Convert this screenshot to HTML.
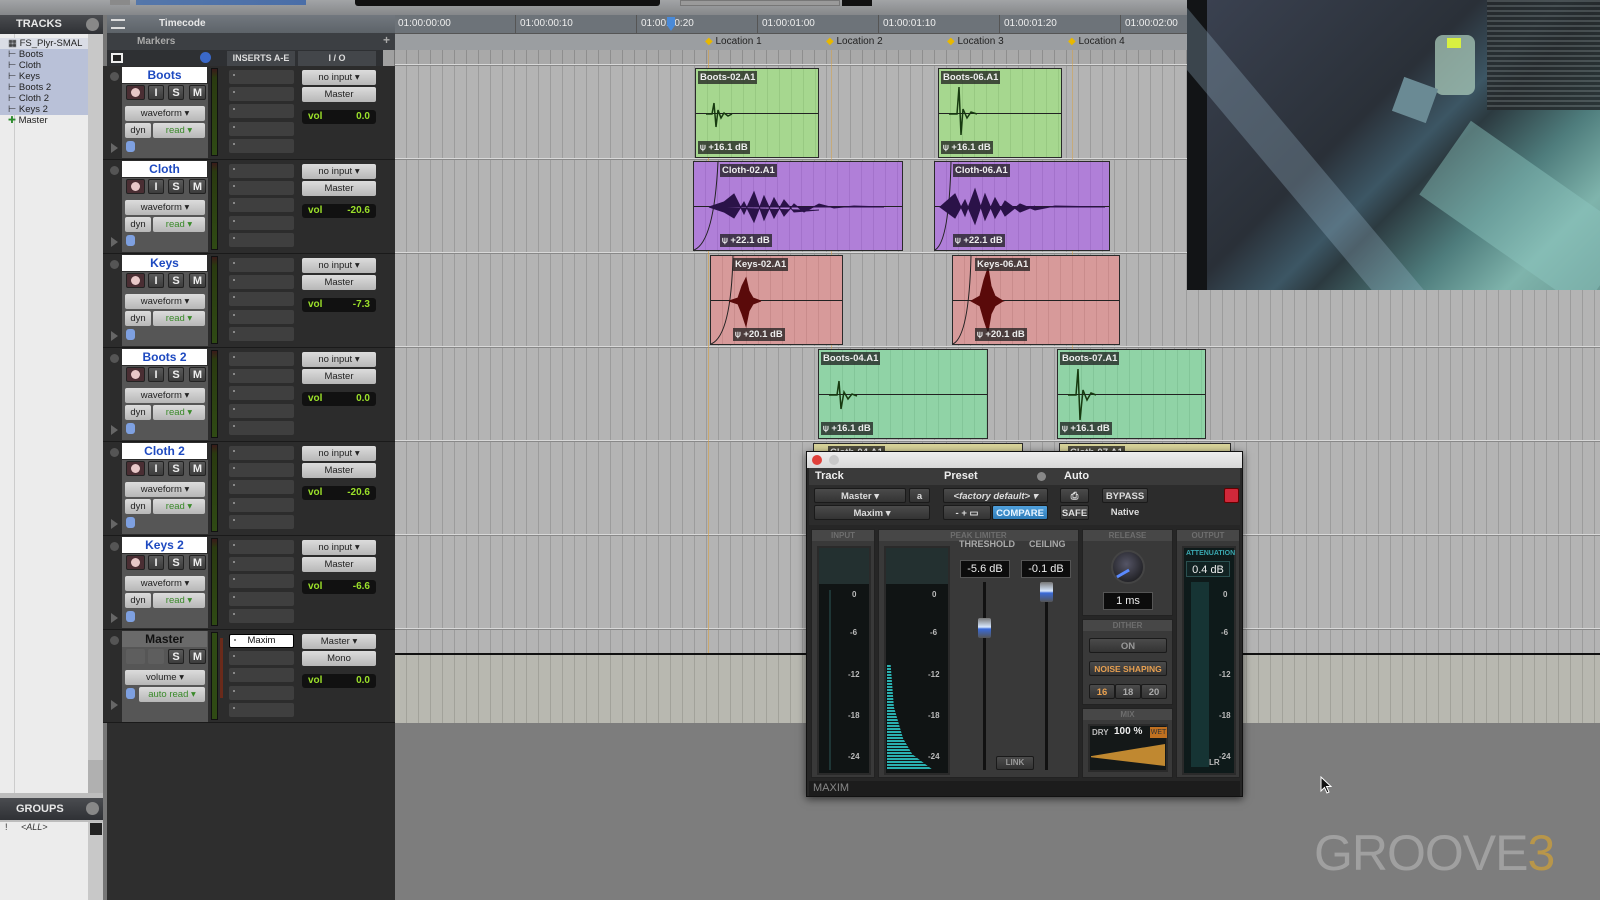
<!DOCTYPE html>
<html><head><meta charset="utf-8">
<style>
*{margin:0;padding:0;box-sizing:border-box}
body{width:1600px;height:900px;overflow:hidden;background:#2e2e2e;font-family:"Liberation Sans",sans-serif;font-size:10px;position:relative}
.a{position:absolute}
.tb{left:0;top:0;width:1600px;height:15px;background:linear-gradient(#a2a4a6,#85878a)}
.lp{left:0;top:15px;width:103px;height:885px;background:#bdbdbd}
.hdr{background:linear-gradient(#4a4c50,#2f3135);color:#e8e8e8;font-weight:bold;font-size:11px}
.list{background:#ececec}
.li{position:absolute;left:8px;font-size:9.5px;color:#222;height:11px;line-height:11px}
.sel{background:#b9c1d8}
.trk{position:absolute;left:103px;width:292px;height:94px;background:#2c2c2c;border-bottom:1px solid #1a1a1a}
.trk .nm{position:absolute;left:19px;top:1px;width:85px;height:16px;background:#fff;color:#1d49c0;font-weight:bold;font-size:12px;text-align:center;line-height:16px}
.trk .sb{position:absolute;left:19px;top:18px;width:86px;height:74px;background:#565656}
.btn{position:absolute;height:15px;background:linear-gradient(#dcdcdc,#b7b7b7);border-radius:2px;color:#222;text-align:center;line-height:15px;font-size:9.5px}
.dk{background:linear-gradient(#5a5a5a,#3c3c3c);color:#eee;font-weight:bold;font-size:11px;border:1px solid #222}
.grn{color:#3a8a2a}
.ins{position:absolute;left:126px;width:65px;height:14px;background:#3f3f3f;border-radius:2px}
.ins:before{content:"";position:absolute;left:4px;top:4px;width:2px;height:2px;background:#888}
.vol{position:absolute;left:199px;top:44px;width:74px;height:14px;background:#111;border-radius:3px;color:#9be02a;font-weight:bold;font-size:10px;line-height:14px;padding:0 6px}
.vol b{float:right}
.met{position:absolute;left:108px;top:2px;width:7px;height:88px;background:linear-gradient(#3a1a1a 0,#2a3a10 10%,#2f4a14 100%);border:1px solid #111}
.cc{position:absolute;left:7px;top:6px;width:9px;height:9px;border-radius:50%;background:#555}
.pt{position:absolute;left:8px;top:77px;width:0;height:0;border-left:7px solid #666;border-top:5px solid transparent;border-bottom:5px solid transparent}
.tl{left:395px;top:50px;width:1205px;height:673px;background:repeating-linear-gradient(90deg,#b4b4b4 0,#b4b4b4 11px,#9c9c9c 11px,#9c9c9c 12px)}
.row{position:absolute;left:395px;width:1205px;height:2px;background:#d8d8d8;border-bottom:1px solid #888}
.clip{position:absolute;border:1px solid #2a2a2a;overflow:hidden}
.clip .t{position:absolute;left:2px;top:2px;background:rgba(30,30,30,.75);color:#eee;font-size:9.5px;font-weight:bold;padding:1px 2px}
.clip .g{position:absolute;left:2px;bottom:3px;background:rgba(30,30,30,.75);color:#eee;font-size:9.5px;font-weight:bold;padding:1px 2px}
.clip .ln{position:absolute;left:0;right:0;top:50%;height:1px;background:#222}
.pl{left:806px;top:451px;width:437px;height:346px;background:#262626;border:1px solid #111;box-shadow:0 2px 8px rgba(0,0,0,.6)}
.pb{position:absolute;height:15px;border-radius:2px;background:linear-gradient(#4b4b4b,#333);color:#ddd;font-weight:bold;font-size:9.5px;text-align:center;line-height:15px;border:1px solid #1a1a1a}
.sec{position:absolute;top:77px;height:249px;background:#393939;border:1px solid #222}
.sh{position:absolute;left:0;right:0;top:0;height:11px;background:#474747;color:#6e6e6e;font-size:8px;font-weight:bold;text-align:center;line-height:11px}
.mb{position:absolute;background:#101414;border:2px solid #2a2a2a}
.sc{position:absolute;color:#bbb;font-size:8px;font-weight:bold}
.vb{position:absolute;background:#0c0c0c;color:#eee;font-size:11px;text-align:center;line-height:16px;border:1px solid #555}
</style></head><body>
<div class="a tb"></div>
<div class="a" style="left:110px;top:0;width:20px;height:5px;background:#8a8a8a"></div>
<div class="a" style="left:136px;top:0;width:170px;height:5px;background:linear-gradient(90deg,#5577aa,#4a6ea8)"></div>
<div class="a" style="left:355px;top:0;width:305px;height:6px;background:#111;border-radius:0 0 3px 3px"></div>
<div class="a" style="left:680px;top:0;width:160px;height:6px;background:#9a9a9a;border:1px solid #777"></div>
<div class="a" style="left:842px;top:0;width:30px;height:6px;background:#111"></div>

<div class="a lp"></div>
<div class="a hdr" style="left:0;top:15px;width:103px;height:19px;line-height:19px;padding-left:16px">TRACKS</div>
<div class="a" style="left:86px;top:18px;width:13px;height:13px;border-radius:50%;background:#888"></div>
<div class="a list" style="left:0;top:34px;width:88px;height:759px"></div>
<div class="a" style="left:14px;top:34px;width:1px;height:759px;background:#ccc"></div>
<div class="a sel" style="left:0;top:49px;width:88px;height:66px"></div>
<div class="a" style="left:0;top:38px;width:88px;height:11px;background:#dadde6"></div>
<div class="li" style="top:38px">▦ FS_Plyr-SMAL</div>
<div class="li" style="top:49px">⊢ Boots</div>
<div class="li" style="top:60px">⊢ Cloth</div>
<div class="li" style="top:71px">⊢ Keys</div>
<div class="li" style="top:82px">⊢ Boots 2</div>
<div class="li" style="top:93px">⊢ Cloth 2</div>
<div class="li" style="top:104px">⊢ Keys 2</div>
<div class="li" style="top:115px"><span style="color:#2a8a2a">✚</span> Master</div>
<div class="a" style="left:88px;top:34px;width:15px;height:759px;background:#c8c8c8"></div>
<div class="a" style="left:88px;top:760px;width:15px;height:33px;background:#b0b0b0"></div>
<div class="a hdr" style="left:0;top:798px;width:103px;height:22px;line-height:22px;padding-left:16px">GROUPS</div>
<div class="a" style="left:86px;top:802px;width:13px;height:13px;border-radius:50%;background:#888"></div>
<div class="a list" style="left:0;top:822px;width:88px;height:78px"></div>
<div class="a" style="left:5px;top:822px;font-size:9px;color:#333">!</div>
<div class="a" style="left:21px;top:822px;font-size:9px;font-style:italic;color:#333">&lt;ALL&gt;</div>
<div class="a" style="left:88px;top:822px;width:15px;height:78px;background:#c8c8c8"></div>
<div class="a" style="left:90px;top:823px;width:12px;height:12px;background:#222"></div>
<div class="a" style="left:103px;top:15px;width:4px;height:885px;background:#777"></div>

<div class="a hdr" style="left:107px;top:15px;width:288px;height:18px;line-height:18px;padding-left:52px;background:linear-gradient(#72787f,#5d6369);font-size:10px">Timecode</div>
<div class="a" style="left:111px;top:19px;width:14px;height:10px;border:1px solid #ddd;border-width:2px 0"></div>
<div class="a" style="left:107px;top:33px;width:288px;height:17px;background:#3c3f43;color:#aaa;font-weight:bold;font-size:10px;line-height:17px;padding-left:30px">Markers</div>
<div class="a" style="left:383px;top:33px;color:#aaa;font-size:12px;font-weight:bold">+</div>
<div class="a" style="left:107px;top:50px;width:288px;height:16px;background:#2e3033"></div>
<div class="a" style="left:111px;top:53px;width:12px;height:10px;border:2px solid #eee;background:#222"></div>
<div class="a" style="left:200px;top:52px;width:11px;height:11px;border-radius:50%;background:#3a68c8"></div>
<div class="a" style="left:227px;top:51px;width:68px;height:15px;background:#43464a;color:#ddd;font-weight:bold;font-size:9px;line-height:15px;text-align:center">INSERTS A-E</div>
<div class="a" style="left:298px;top:51px;width:78px;height:15px;background:#43464a;color:#ddd;font-weight:bold;font-size:9px;line-height:15px;text-align:center">I / O</div>

<div class="a" style="left:395px;top:15px;width:792px;height:18px;background:#6d7379"></div>
<div class="a" style="left:395px;top:33px;width:792px;height:17px;background:#9b9ea1;border-top:1px solid #555"></div>
<div class="a" style="left:398px;top:18px;color:#eee;font-size:10px">01:00:00:00</div>
<div class="a" style="left:520px;top:18px;color:#eee;font-size:10px">01:00:00:10</div>
<div class="a" style="left:641px;top:18px;color:#eee;font-size:10px">01:00:00:20</div>
<div class="a" style="left:762px;top:18px;color:#eee;font-size:10px">01:00:01:00</div>
<div class="a" style="left:883px;top:18px;color:#eee;font-size:10px">01:00:01:10</div>
<div class="a" style="left:1004px;top:18px;color:#eee;font-size:10px">01:00:01:20</div>
<div class="a" style="left:1125px;top:18px;color:#eee;font-size:10px">01:00:02:00</div>
<div class="a" style="left:515px;top:15px;width:1px;height:18px;background:#555"></div>
<div class="a" style="left:636px;top:15px;width:1px;height:18px;background:#555"></div>
<div class="a" style="left:757px;top:15px;width:1px;height:18px;background:#555"></div>
<div class="a" style="left:878px;top:15px;width:1px;height:18px;background:#555"></div>
<div class="a" style="left:999px;top:15px;width:1px;height:18px;background:#555"></div>
<div class="a" style="left:1120px;top:15px;width:1px;height:18px;background:#555"></div>
<div class="a" style="left:667px;top:17px;width:8px;height:14px;background:#4a8ad8;clip-path:polygon(0 0,100% 0,100% 60%,50% 100%,0 60%)"></div>
<div class="a" style="left:705px;top:36px;font-size:10px;color:#222"><span style="color:#e8b800">◆</span> Location 1</div>
<div class="a" style="left:826px;top:36px;font-size:10px;color:#222"><span style="color:#e8b800">◆</span> Location 2</div>
<div class="a" style="left:947px;top:36px;font-size:10px;color:#222"><span style="color:#e8b800">◆</span> Location 3</div>
<div class="a" style="left:1068px;top:36px;font-size:10px;color:#222"><span style="color:#e8b800">◆</span> Location 4</div>

<div class="a tl"></div>
<div class="a" style="left:395px;top:50px;width:1205px;height:16px;background:repeating-linear-gradient(90deg,#a9a9a9 0,#a9a9a9 11px,#8e8e8e 11px,#8e8e8e 12px)"></div>
<div class="a" style="left:383px;top:50px;width:12px;height:673px;background:#a0a0a0;border-right:1px solid #777"></div>
<div class="row" style="top:64px"></div><div class="row" style="top:158px"></div><div class="row" style="top:252px"></div><div class="row" style="top:346px"></div><div class="row" style="top:440px"></div><div class="row" style="top:534px"></div><div class="row" style="top:628px"></div>
<div class="a" style="left:708px;top:50px;width:1px;height:673px;background:#d8a040;opacity:.6"></div>
<div class="a" style="left:831px;top:50px;width:1px;height:300px;background:#d8a040;opacity:.5"></div>
<div class="a" style="left:1072px;top:50px;width:1px;height:300px;background:#d8a040;opacity:.5"></div>
<div class="a" style="left:395px;top:653px;width:1205px;height:2px;background:#111"></div>
<div class="a" style="left:395px;top:655px;width:1205px;height:68px;background:repeating-linear-gradient(90deg,#b8b8b0 0,#b8b8b0 11px,#a2a29a 11px,#a2a29a 12px)"></div>
<div class="a" style="left:383px;top:723px;width:1217px;height:177px;background:#7d7d7d"></div>
<div class="a" style="left:383px;top:723px;width:12px;height:177px;background:#2e2e2e"></div>

<div class="clip" style="left:695px;top:68px;width:124px;height:90px;background:repeating-linear-gradient(90deg,#a6d78f 0,#a6d78f 11px,#98c982 11px,#98c982 12px)"><div class="ln"></div><svg class="a" style="left:8px;top:20px" width="40" height="50"><path d="M2 25 L8 25 L10 14 L12 38 L14 21 L17 29 L20 24 L24 27 L28 25" stroke="#173a10" stroke-width="1.5" fill="none"/></svg><div class="t">Boots-02.A1</div><div class="g">⍦ +16.1 dB</div></div>
<div class="clip" style="left:938px;top:68px;width:124px;height:90px;background:repeating-linear-gradient(90deg,#a6d78f 0,#a6d78f 11px,#98c982 11px,#98c982 12px)"><div class="ln"></div><svg class="a" style="left:8px;top:12px" width="40" height="66"><path d="M2 33 L10 33 L12 6 L14 54 L16 28 L20 37 L24 31 L30 33" stroke="#173a10" stroke-width="1.5" fill="none"/></svg><div class="t">Boots-06.A1</div><div class="g">⍦ +16.1 dB</div></div>
<div class="clip" style="left:693px;top:161px;width:210px;height:90px;background:repeating-linear-gradient(90deg,#b07fd8 0,#b07fd8 11px,#a372cb 11px,#a372cb 12px)"><div class="ln"></div><svg class="a" style="left:0;top:0" width="210" height="90"><path d="M0 88 Q20 80 24 0" stroke="#222" fill="none"/><path d="M15 45 L30 40 L40 32 L50 52 L60 30 L70 58 L80 36 L90 54 L100 42 L110 50 L125 42 L140 46 L160 44 L190 45 L15 45 L30 50 L40 56 L50 40 L60 60 L70 34 L80 56 L90 38 L100 50 L125 48" fill="#2a1248" stroke="#2a1248" stroke-width="1"/></svg><div class="t" style="left:26px">Cloth-02.A1</div><div class="g" style="left:26px">⍦ +22.1 dB</div></div>
<div class="clip" style="left:934px;top:161px;width:176px;height:90px;background:repeating-linear-gradient(90deg,#b07fd8 0,#b07fd8 11px,#a372cb 11px,#a372cb 12px)"><div class="ln"></div><svg class="a" style="left:0;top:0" width="176" height="90"><path d="M0 88 Q14 80 16 0" stroke="#222" fill="none"/><path d="M5 45 L20 32 L30 54 L40 27 L50 58 L60 36 L70 54 L85 42 L100 48 L120 44 L170 45 L5 45 L20 56 L30 38 L40 62 L50 32 L60 56 L70 39 L85 50 L100 44" fill="#2a1248" stroke="#2a1248" stroke-width="1"/></svg><div class="t" style="left:18px">Cloth-06.A1</div><div class="g" style="left:18px">⍦ +22.1 dB</div></div>
<div class="clip" style="left:710px;top:255px;width:133px;height:90px;background:repeating-linear-gradient(90deg,#d79a9a 0,#d79a9a 11px,#c98c8c 11px,#c98c8c 12px)"><div class="ln"></div><svg class="a" style="left:0;top:0" width="133" height="90"><path d="M0 88 Q20 80 22 0" stroke="#222" fill="none"/><path d="M18 45 L27 42 L31 30 L35 22 L38 35 L42 42 L50 45 L18 45 L27 48 L31 58 L35 70 L38 55 L42 48 L50 45" fill="#5a0a0a" stroke="#5a0a0a" stroke-width="1"/></svg><div class="t" style="left:22px">Keys-02.A1</div><div class="g" style="left:22px">⍦ +20.1 dB</div></div>
<div class="clip" style="left:952px;top:255px;width:168px;height:90px;background:repeating-linear-gradient(90deg,#d79a9a 0,#d79a9a 11px,#c98c8c 11px,#c98c8c 12px)"><div class="ln"></div><svg class="a" style="left:0;top:0" width="168" height="90"><path d="M0 88 Q16 80 18 0" stroke="#222" fill="none"/><path d="M18 45 L27 40 L31 24 L35 12 L38 30 L42 40 L50 45 L18 45 L27 50 L31 64 L35 76 L38 58 L42 50 L50 45" fill="#5a0a0a" stroke="#5a0a0a" stroke-width="1"/></svg><div class="t" style="left:22px">Keys-06.A1</div><div class="g" style="left:22px">⍦ +20.1 dB</div></div>
<div class="clip" style="left:818px;top:349px;width:170px;height:90px;background:repeating-linear-gradient(90deg,#90d3a6 0,#90d3a6 11px,#83c699 11px,#83c699 12px)"><div class="ln"></div><svg class="a" style="left:8px;top:20px" width="50" height="50"><path d="M2 25 L10 25 L12 11 L14 39 L17 22 L21 29 L25 24 L30 26" stroke="#173a10" stroke-width="1.5" fill="none"/></svg><div class="t">Boots-04.A1</div><div class="g">⍦ +16.1 dB</div></div>
<div class="clip" style="left:1057px;top:349px;width:149px;height:90px;background:repeating-linear-gradient(90deg,#90d3a6 0,#90d3a6 11px,#83c699 11px,#83c699 12px)"><div class="ln"></div><svg class="a" style="left:8px;top:10px" width="50" height="70"><path d="M2 35 L10 35 L12 9 L14 60 L17 30 L21 40 L25 33 L30 35" stroke="#173a10" stroke-width="1.5" fill="none"/></svg><div class="t">Boots-07.A1</div><div class="g">⍦ +16.1 dB</div></div>
<div class="clip" style="left:813px;top:443px;width:210px;height:20px;background:#d8d49a"><div class="t" style="left:14px">Cloth-04.A1</div></div>
<div class="clip" style="left:1059px;top:443px;width:172px;height:20px;background:#d8d49a"><div class="t" style="left:8px">Cloth-07.A1</div></div>

<div class="trk" style="top:66px"><div class="cc"></div><div class="pt"></div><div class="sb"></div><div class="nm">Boots</div>
<div class="btn" style="left:23px;top:19px;width:19px;background:#4a2e33;border:1px solid #222"><span style="display:inline-block;width:9px;height:9px;border-radius:50%;background:#e8c8c8;margin-top:2px"></span></div><div class="btn dk" style="left:45px;top:19px;width:16px">I</div><div class="btn dk" style="left:65px;top:19px;width:16px">S</div><div class="btn dk" style="left:86px;top:19px;width:17px">M</div>
<div class="btn" style="left:22px;top:40px;width:80px">waveform ▾</div><div class="btn" style="left:22px;top:57px;width:26px">dyn</div><div class="btn grn" style="left:50px;top:57px;width:52px">read ▾</div>
<div class="a" style="left:23px;top:75px;width:9px;height:11px;border-radius:3px;background:#7ea0e0"></div>
<div class="met"></div>
<div class="ins" style="top:4px"></div><div class="ins" style="top:21px"></div><div class="ins" style="top:38px"></div><div class="ins" style="top:56px"></div><div class="ins" style="top:73px"></div>
<div class="btn" style="left:199px;top:4px;width:74px">no input ▾</div><div class="btn" style="left:199px;top:21px;width:74px">Master</div><div class="vol">vol<b>0.0</b></div></div>

<div class="trk" style="top:160px"><div class="cc"></div><div class="pt"></div><div class="sb"></div><div class="nm">Cloth</div>
<div class="btn" style="left:23px;top:19px;width:19px;background:#4a2e33;border:1px solid #222"><span style="display:inline-block;width:9px;height:9px;border-radius:50%;background:#e8c8c8;margin-top:2px"></span></div><div class="btn dk" style="left:45px;top:19px;width:16px">I</div><div class="btn dk" style="left:65px;top:19px;width:16px">S</div><div class="btn dk" style="left:86px;top:19px;width:17px">M</div>
<div class="btn" style="left:22px;top:40px;width:80px">waveform ▾</div><div class="btn" style="left:22px;top:57px;width:26px">dyn</div><div class="btn grn" style="left:50px;top:57px;width:52px">read ▾</div>
<div class="a" style="left:23px;top:75px;width:9px;height:11px;border-radius:3px;background:#7ea0e0"></div>
<div class="met"></div>
<div class="ins" style="top:4px"></div><div class="ins" style="top:21px"></div><div class="ins" style="top:38px"></div><div class="ins" style="top:56px"></div><div class="ins" style="top:73px"></div>
<div class="btn" style="left:199px;top:4px;width:74px">no input ▾</div><div class="btn" style="left:199px;top:21px;width:74px">Master</div><div class="vol">vol<b>-20.6</b></div></div>

<div class="trk" style="top:254px"><div class="cc"></div><div class="pt"></div><div class="sb"></div><div class="nm">Keys</div>
<div class="btn" style="left:23px;top:19px;width:19px;background:#4a2e33;border:1px solid #222"><span style="display:inline-block;width:9px;height:9px;border-radius:50%;background:#e8c8c8;margin-top:2px"></span></div><div class="btn dk" style="left:45px;top:19px;width:16px">I</div><div class="btn dk" style="left:65px;top:19px;width:16px">S</div><div class="btn dk" style="left:86px;top:19px;width:17px">M</div>
<div class="btn" style="left:22px;top:40px;width:80px">waveform ▾</div><div class="btn" style="left:22px;top:57px;width:26px">dyn</div><div class="btn grn" style="left:50px;top:57px;width:52px">read ▾</div>
<div class="a" style="left:23px;top:75px;width:9px;height:11px;border-radius:3px;background:#7ea0e0"></div>
<div class="met"></div>
<div class="ins" style="top:4px"></div><div class="ins" style="top:21px"></div><div class="ins" style="top:38px"></div><div class="ins" style="top:56px"></div><div class="ins" style="top:73px"></div>
<div class="btn" style="left:199px;top:4px;width:74px">no input ▾</div><div class="btn" style="left:199px;top:21px;width:74px">Master</div><div class="vol">vol<b>-7.3</b></div></div>

<div class="trk" style="top:348px"><div class="cc"></div><div class="pt"></div><div class="sb"></div><div class="nm">Boots 2</div>
<div class="btn" style="left:23px;top:19px;width:19px;background:#4a2e33;border:1px solid #222"><span style="display:inline-block;width:9px;height:9px;border-radius:50%;background:#e8c8c8;margin-top:2px"></span></div><div class="btn dk" style="left:45px;top:19px;width:16px">I</div><div class="btn dk" style="left:65px;top:19px;width:16px">S</div><div class="btn dk" style="left:86px;top:19px;width:17px">M</div>
<div class="btn" style="left:22px;top:40px;width:80px">waveform ▾</div><div class="btn" style="left:22px;top:57px;width:26px">dyn</div><div class="btn grn" style="left:50px;top:57px;width:52px">read ▾</div>
<div class="a" style="left:23px;top:75px;width:9px;height:11px;border-radius:3px;background:#7ea0e0"></div>
<div class="met"></div>
<div class="ins" style="top:4px"></div><div class="ins" style="top:21px"></div><div class="ins" style="top:38px"></div><div class="ins" style="top:56px"></div><div class="ins" style="top:73px"></div>
<div class="btn" style="left:199px;top:4px;width:74px">no input ▾</div><div class="btn" style="left:199px;top:21px;width:74px">Master</div><div class="vol">vol<b>0.0</b></div></div>

<div class="trk" style="top:442px"><div class="cc"></div><div class="pt"></div><div class="sb"></div><div class="nm">Cloth 2</div>
<div class="btn" style="left:23px;top:19px;width:19px;background:#4a2e33;border:1px solid #222"><span style="display:inline-block;width:9px;height:9px;border-radius:50%;background:#e8c8c8;margin-top:2px"></span></div><div class="btn dk" style="left:45px;top:19px;width:16px">I</div><div class="btn dk" style="left:65px;top:19px;width:16px">S</div><div class="btn dk" style="left:86px;top:19px;width:17px">M</div>
<div class="btn" style="left:22px;top:40px;width:80px">waveform ▾</div><div class="btn" style="left:22px;top:57px;width:26px">dyn</div><div class="btn grn" style="left:50px;top:57px;width:52px">read ▾</div>
<div class="a" style="left:23px;top:75px;width:9px;height:11px;border-radius:3px;background:#7ea0e0"></div>
<div class="met"></div>
<div class="ins" style="top:4px"></div><div class="ins" style="top:21px"></div><div class="ins" style="top:38px"></div><div class="ins" style="top:56px"></div><div class="ins" style="top:73px"></div>
<div class="btn" style="left:199px;top:4px;width:74px">no input ▾</div><div class="btn" style="left:199px;top:21px;width:74px">Master</div><div class="vol">vol<b>-20.6</b></div></div>

<div class="trk" style="top:536px"><div class="cc"></div><div class="pt"></div><div class="sb"></div><div class="nm">Keys 2</div>
<div class="btn" style="left:23px;top:19px;width:19px;background:#4a2e33;border:1px solid #222"><span style="display:inline-block;width:9px;height:9px;border-radius:50%;background:#e8c8c8;margin-top:2px"></span></div><div class="btn dk" style="left:45px;top:19px;width:16px">I</div><div class="btn dk" style="left:65px;top:19px;width:16px">S</div><div class="btn dk" style="left:86px;top:19px;width:17px">M</div>
<div class="btn" style="left:22px;top:40px;width:80px">waveform ▾</div><div class="btn" style="left:22px;top:57px;width:26px">dyn</div><div class="btn grn" style="left:50px;top:57px;width:52px">read ▾</div>
<div class="a" style="left:23px;top:75px;width:9px;height:11px;border-radius:3px;background:#7ea0e0"></div>
<div class="met"></div>
<div class="ins" style="top:4px"></div><div class="ins" style="top:21px"></div><div class="ins" style="top:38px"></div><div class="ins" style="top:56px"></div><div class="ins" style="top:73px"></div>
<div class="btn" style="left:199px;top:4px;width:74px">no input ▾</div><div class="btn" style="left:199px;top:21px;width:74px">Master</div><div class="vol">vol<b>-6.6</b></div></div>

<div class="trk" style="top:630px;height:93px"><div class="cc"></div><div class="pt" style="top:70px"></div><div class="a" style="left:19px;top:1px;width:86px;height:91px;background:#565656"></div><div class="nm" style="background:#6a6a6a;color:#111">Master</div>
<div class="btn" style="left:23px;top:19px;width:19px;background:#5e5e5e"></div><div class="btn" style="left:45px;top:19px;width:16px;background:#5e5e5e"></div><div class="btn dk" style="left:65px;top:19px;width:16px">S</div><div class="btn dk" style="left:86px;top:19px;width:17px">M</div>
<div class="btn" style="left:22px;top:40px;width:80px">volume ▾</div>
<div class="a" style="left:23px;top:58px;width:9px;height:11px;border-radius:3px;background:#7ea0e0"></div><div class="btn grn" style="left:36px;top:57px;width:66px">auto read ▾</div>
<div class="met" style="background:#2f4a14"></div><div class="a" style="left:117px;top:8px;width:3px;height:60px;background:#6a2a1a"></div>
<div class="ins" style="top:4px;background:#fff;border:1px solid #000;color:#111;font-size:9.5px;text-align:center;line-height:12px">Maxim</div><div class="ins" style="top:21px"></div><div class="ins" style="top:38px"></div><div class="ins" style="top:56px"></div><div class="ins" style="top:73px"></div>
<div class="btn" style="left:199px;top:4px;width:74px">Master ▾</div><div class="btn" style="left:199px;top:21px;width:74px">Mono</div><div class="vol">vol<b>0.0</b></div></div>

<!-- video -->
<div class="a" style="left:1187px;top:0;width:413px;height:290px;background:#121416;overflow:hidden">
<div class="a" style="left:20px;top:0;width:393px;height:290px;background:linear-gradient(135deg,#3a4150 0%,#2a3038 40%,#3c5664 52%,#2c3a40 58%,#4e7c7c 72%,#7fb4ac 86%,#6a9a94 100%)"></div>
<div class="a" style="left:90px;top:-40px;width:40px;height:420px;background:#9ab8cc;opacity:.3;transform:rotate(-40deg)"></div>
<div class="a" style="left:240px;top:170px;width:200px;height:90px;background:#8ec8c0;opacity:.45;transform:rotate(35deg)"></div>
<div class="a" style="left:248px;top:35px;width:40px;height:60px;background:#a8c8b8;border-radius:8px;opacity:.75"></div>
<div class="a" style="left:260px;top:38px;width:14px;height:10px;background:#d8f040"></div>
<div class="a" style="left:210px;top:82px;width:36px;height:36px;background:#6a8a94;transform:rotate(20deg)"></div>
<div class="a" style="left:300px;top:0;width:113px;height:110px;background:repeating-linear-gradient(0deg,#24282a 0,#24282a 3px,#4a5052 3px,#4a5052 5px);opacity:.85"></div>
</div>

<!-- plugin -->
<div class="a pl">
<div class="a" style="left:0;top:0;width:435px;height:16px;background:linear-gradient(#eee,#d8d8d8)"></div>
<div class="a" style="left:5px;top:3px;width:10px;height:10px;border-radius:50%;background:#e0403a"></div>
<div class="a" style="left:22px;top:3px;width:10px;height:10px;border-radius:50%;background:#c8c8c8"></div>
<div class="a" style="left:2px;top:16px;width:431px;height:17px;background:#3a3a3a;color:#eee;font-weight:bold;font-size:11px;line-height:17px"><span class="a" style="left:6px">Track</span><span class="a" style="left:135px">Preset</span><span class="a" style="left:255px">Auto</span></div>
<div class="a" style="left:230px;top:20px;width:9px;height:9px;border-radius:50%;background:#888"></div>
<div class="a" style="left:2px;top:33px;width:431px;height:40px;background:#2c2c2c"></div>
<div class="pb" style="left:7px;top:36px;width:92px">Master ▾</div><div class="pb" style="left:102px;top:36px;width:21px">a</div>
<div class="pb" style="left:7px;top:53px;width:116px">Maxim ▾</div>
<div class="pb" style="left:136px;top:36px;width:105px;font-style:italic">&lt;factory default&gt; ▾</div>
<div class="pb" style="left:136px;top:53px;width:48px">- + ▭</div>
<div class="pb" style="left:185px;top:53px;width:56px;background:linear-gradient(#4fa0dc,#2f7cb8);color:#e8f4ff">COMPARE</div>
<div class="pb" style="left:253px;top:36px;width:29px">⎙</div><div class="pb" style="left:253px;top:53px;width:29px">SAFE</div>
<div class="pb" style="left:295px;top:36px;width:46px">BYPASS</div><div class="a" style="left:295px;top:53px;width:46px;color:#ddd;font-weight:bold;font-size:9.5px;text-align:center;line-height:15px">Native</div>
<div class="a" style="left:417px;top:36px;width:15px;height:15px;background:#d0283a;border-radius:2px;border:1px solid #600"></div>
<div class="sec" style="left:4px;width:64px"><div class="sh">INPUT</div>
<div class="mb" style="left:5px;top:16px;width:54px;height:229px"></div><div class="a" style="left:7px;top:18px;width:50px;height:36px;background:#233030"></div>
<div class="a" style="left:17px;top:60px;width:2px;height:180px;background:#1e3636"></div>
<div class="sc" style="left:40px;top:60px">0</div><div class="sc" style="left:38px;top:98px">-6</div><div class="sc" style="left:36px;top:140px">-12</div><div class="sc" style="left:36px;top:181px">-18</div><div class="sc" style="left:36px;top:222px">-24</div></div>
<div class="sec" style="left:71px;width:201px"><div class="sh">PEAK LIMITER</div>
<div class="mb" style="left:5px;top:16px;width:66px;height:229px"></div><div class="a" style="left:7px;top:18px;width:62px;height:36px;background:#233030"></div>
<div class="sc" style="left:53px;top:60px">0</div><div class="sc" style="left:51px;top:98px">-6</div><div class="sc" style="left:49px;top:140px">-12</div><div class="sc" style="left:49px;top:181px">-18</div><div class="sc" style="left:49px;top:222px">-24</div>
<div class="a" style="left:8px;top:135px;width:46px;height:105px;background:repeating-linear-gradient(180deg,#2ab0b0 0,#2ab0b0 2px,transparent 2px,transparent 3px);clip-path:polygon(0 0,8% 0,15% 40%,35% 70%,55% 85%,100% 100%,0 100%)"></div>
<div class="a" style="left:80px;top:9px;color:#aaa;font-weight:bold;font-size:9px">THRESHOLD</div><div class="a" style="left:150px;top:9px;color:#aaa;font-weight:bold;font-size:9px">CEILING</div>
<div class="vb" style="left:81px;top:30px;width:50px">-5.6 dB</div><div class="vb" style="left:142px;top:30px;width:50px">-0.1 dB</div>
<div class="a" style="left:104px;top:52px;width:3px;height:188px;background:#111"></div>
<div class="a" style="left:166px;top:52px;width:3px;height:188px;background:#111"></div>
<div class="a" style="left:99px;top:88px;width:13px;height:20px;background:linear-gradient(#777,#d8e8ff 45%,#3a6ad8 55%,#555);border-radius:2px"></div>
<div class="a" style="left:161px;top:52px;width:13px;height:20px;background:linear-gradient(#777,#d8e8ff 45%,#3a6ad8 55%,#555);border-radius:2px"></div>
<div class="pb" style="left:117px;top:226px;width:38px;height:14px;line-height:12px;font-size:8px;color:#999">LINK</div></div>
<div class="sec" style="left:275px;width:91px;height:87px"><div class="sh">RELEASE</div>
<div class="a" style="left:28px;top:20px;width:34px;height:34px;border-radius:50%;background:radial-gradient(circle at 45% 40%,#556,#111);border:2px solid #444"></div>
<div class="a" style="left:33px;top:42px;width:14px;height:3px;background:#5a8aff;transform:rotate(-30deg)"></div>
<div class="vb" style="left:20px;top:62px;width:50px">1 ms</div></div>
<div class="sec" style="left:275px;top:167px;width:91px;height:86px"><div class="sh">DITHER</div>
<div class="pb" style="left:6px;top:18px;width:78px;color:#999">ON</div>
<div class="pb" style="left:6px;top:41px;width:78px;color:#e8a050;font-size:8.5px">NOISE SHAPING</div>
<div class="pb" style="left:6px;top:64px;width:26px;color:#e8a050">16</div><div class="pb" style="left:32px;top:64px;width:26px;color:#aaa">18</div><div class="pb" style="left:58px;top:64px;width:26px;color:#aaa">20</div></div>
<div class="sec" style="left:275px;top:256px;width:91px;height:70px"><div class="sh">MIX</div>
<div class="a" style="left:5px;top:15px;width:80px;height:48px;background:#141818;border:2px solid #2a2a2a"></div>
<div class="a" style="left:9px;top:19px;color:#bbb;font-size:8px;font-weight:bold">DRY</div><div class="a" style="left:31px;top:17px;color:#eee;font-size:10px;font-weight:bold">100 %</div><div class="a" style="left:67px;top:18px;width:17px;height:11px;background:#c07020;color:#333;font-size:7px;text-align:center;line-height:11px">WET</div>
<div class="a" style="left:8px;top:35px;width:74px;height:22px;background:#c08830;clip-path:polygon(0 55%,100% 0,100% 100%,0 60%)"></div></div>
<div class="sec" style="left:369px;width:64px"><div class="sh">OUTPUT</div>
<div class="mb" style="left:5px;top:16px;width:54px;height:229px;background:#0e1a1a"></div>
<div class="a" style="left:9px;top:20px;color:#3aa8b0;font-size:7px;font-weight:bold">ATTENUATION</div>
<div class="vb" style="left:9px;top:31px;width:44px;height:16px;background:#122;border-color:#2a5050">0.4 dB</div>
<div class="a" style="left:14px;top:52px;width:18px;height:185px;background:#163434"></div>
<div class="sc" style="left:46px;top:60px">0</div><div class="sc" style="left:44px;top:98px">-6</div><div class="sc" style="left:42px;top:140px">-12</div><div class="sc" style="left:42px;top:181px">-18</div><div class="sc" style="left:42px;top:222px">-24</div><div class="sc" style="left:32px;top:228px">LR</div></div>
<div class="a" style="left:2px;top:329px;width:431px;height:15px;background:#1c1c1c;color:#888;font-size:11px;line-height:15px;padding-left:4px">MAXIM</div>
</div>

<svg class="a" style="left:1320px;top:776px" width="14" height="20"><path d="M1 1 L1 15 L4.5 11.5 L7 17 L9 16 L6.5 10.5 L11 10.5 Z" fill="#111" stroke="#fff" stroke-width="1"/></svg>
<div class="a" style="left:1314px;top:828px;font-size:50px;letter-spacing:-1px;color:#a0a0a0;line-height:50px">GROOVE<span style="color:#b8964a">3</span></div>
</body></html>
